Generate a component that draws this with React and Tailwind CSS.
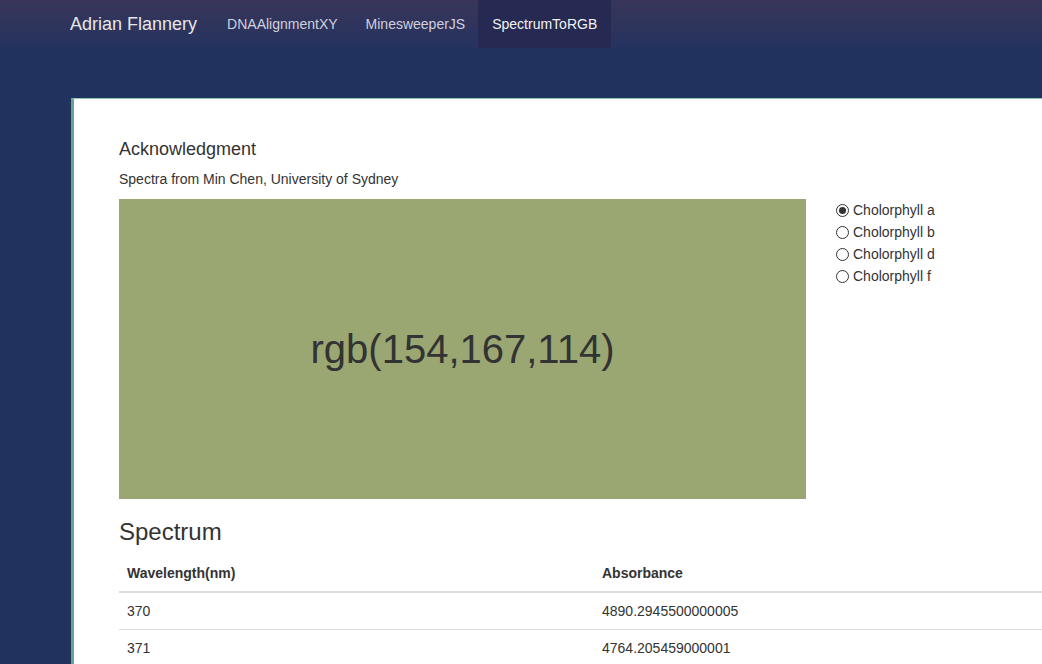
import { useState } from "react";

const pigments = ["Cholorphyll a", "Cholorphyll b", "Cholorphyll d", "Cholorphyll f"];

const rows = [
  ["370", "4890.2945500000005"],
  ["371", "4764.205459000001"],
];

function Radio({ label, checked, onSelect }) {
  return (
    <label className="flex items-center h-[22px] cursor-pointer" onClick={onSelect}>
      <span className="w-[13px] h-[13px] rounded-full border border-[#333] bg-white flex items-center justify-center shrink-0">
        {checked && <span className="w-[7px] h-[7px] rounded-full bg-[#333]" />}
      </span>
      <span className="ml-[4px] text-[14px] text-[#333]">{label}</span>
    </label>
  );
}

export default function App() {
  const [selected, setSelected] = useState(0);

  return (
    <div
      className="h-screen w-full overflow-hidden bg-[#22325f]"
      style={{ fontFamily: '"Liberation Sans", Arial, Helvetica, sans-serif' }}
    >
      <nav className="h-[48px] bg-linear-to-b from-[#383559] to-[#25335f] flex items-stretch pl-[55px]">
        <a className="flex items-center px-[15px] text-[18px] text-[#e6e6e6]">Adrian Flannery</a>
        <a className="flex items-center pl-[15px] pr-[14px] text-[14px] text-[#cfd0dc]">DNAAlignmentXY</a>
        <a className="flex items-center pl-[14px] pr-[13px] text-[14px] text-[#cfd0dc]">MinesweeperJS</a>
        <a className="flex items-center px-[14px] text-[14px] text-[#f2f2f2] bg-[#262a52]">SpectrumToRGB</a>
      </nav>

      <div className="pt-[50px] pl-[71px]">
        <div className="w-[1060px] bg-white border-l-[3px] border-t border-l-[#5fa98a] border-t-[#8fc7ae] pl-[45px] pt-[40px] pb-[20px] text-[#333]">
          <h4 className="text-[18px] leading-[20px]">Acknowledgment</h4>
          <p className="mt-[10px] text-[14px] leading-[20px]">Spectra from Min Chen, University of Sydney</p>

          <div className="mt-[10px] flex">
            <div className="w-[687px] h-[300px] bg-[rgb(154,167,114)] flex items-center justify-center">
              <span className="text-[40px] leading-none text-[#333]">rgb(154,167,114)</span>
            </div>
            <div className="ml-[30px] flex flex-col">
              {pigments.map((p, i) => (
                <Radio key={p} label={p} checked={selected === i} onSelect={() => setSelected(i)} />
              ))}
            </div>
          </div>

          <h2 className="mt-[20px] text-[24px] leading-[26px]">Spectrum</h2>

          <table className="mt-[10px] w-[950px] text-[14px] leading-[20px] border-collapse">
            <thead>
              <tr>
                <th className="w-1/2 text-left font-bold p-[8px] border-b-2 border-[#ddd]">Wavelength(nm)</th>
                <th className="w-1/2 text-left font-bold p-[8px] border-b-2 border-[#ddd]">Absorbance</th>
              </tr>
            </thead>
            <tbody>
              {rows.map(([w, a]) => (
                <tr key={w}>
                  <td className="p-[8px] border-b border-[#ddd]">{w}</td>
                  <td className="p-[8px] border-b border-[#ddd]">{a}</td>
                </tr>
              ))}
            </tbody>
          </table>
        </div>
      </div>
    </div>
  );
}
